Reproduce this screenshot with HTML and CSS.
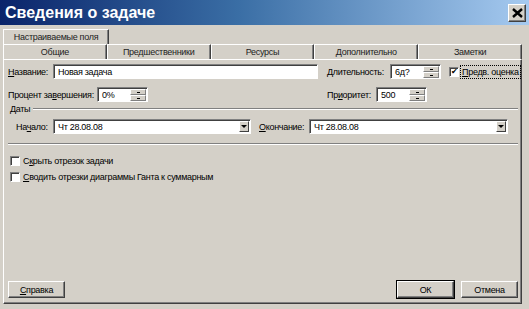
FILE: index.html
```html
<!DOCTYPE html>
<html lang="ru">
<head>
    <meta charset="UTF-8">
    <meta name="viewport" content="width=device-width, initial-scale=1.0">
    <title>Сведения о задаче</title>
    <link rel="stylesheet" href="styles.css">
</head>
<body>
    <div class="dialog">
        <div class="titlebar">
            <span class="title">Сведения о задаче</span>
            <button class="close">
                <svg width="11" height="10" viewBox="0 0 11 10"><path d="M1 1 L10 9 M10 1 L1 9" stroke="#000" stroke-width="2.4"/></svg>
            </button>
        </div>

        <div class="tabs">
            <div class="tab-row back">
                <div class="tab">Настраиваемые поля</div>
            </div>
            <div class="tab-row">
                <div class="tab">Общие</div>
                <div class="tab">Предшественники</div>
                <div class="tab">Ресурсы</div>
                <div class="tab">Дополнительно</div>
                <div class="tab">Заметки</div>
            </div>
        </div>

        <div class="panel">
            <div class="row">
                <label class="lbl name-lbl"><u>Н</u>азвание:</label>
                <div class="field name-field">Новая задача</div>
                <label class="lbl dur-lbl"><u>Д</u>лительность:</label>
                <div class="field spin dur-field">
                    <span class="value">6д?</span>
                    <div class="spinner"><span></span><span></span></div>
                </div>
                <div class="check-wrap">
                    <span class="checkbox checked">✔</span>
                    <span class="focus"><u>П</u>редв. оценка</span>
                </div>
            </div>

            <div class="row second">
                <label class="lbl pct-lbl">Процент за<u>в</u>ершения:</label>
                <div class="field spin pct-field">
                    <span class="value">0%</span>
                    <div class="spinner"><span></span><span></span></div>
                </div>
                <label class="lbl prio-lbl">Пр<u>и</u>оритет:</label>
                <div class="field spin prio-field">
                    <span class="value">500</span>
                    <div class="spinner"><span></span><span></span></div>
                </div>
            </div>

            <div class="group">
                <div class="group-title"><span>Даты</span></div>
                <div class="row dates">
                    <label class="lbl start-lbl">На<u>ч</u>ало:</label>
                    <div class="field combo start-field">
                        <span class="value">Чт 28.08.08</span>
                        <span class="drop"></span>
                    </div>
                    <label class="lbl end-lbl"><u>О</u>кончание:</label>
                    <div class="field combo end-field">
                        <span class="value">Чт 28.08.08</span>
                        <span class="drop"></span>
                    </div>
                </div>
            </div>

            <div class="separator"></div>

            <div class="options">
                <div class="option"><span class="checkbox"></span><span>С<u>к</u>рыть отрезок задачи</span></div>
                <div class="option"><span class="checkbox"></span><span><u>С</u>водить отрезки диаграммы Ганта к суммарным</span></div>
            </div>

            <div class="footer">
                <button class="btn"><u>С</u>правка</button>
                <div class="footer-right">
                    <button class="btn default">ОК</button>
                    <button class="btn">Отмена</button>
                </div>
            </div>
        </div>
    </div>
</body>
</html>
```

FILE: styles.css
```css
body {
    margin: 0;
    font-family: "Liberation Sans", Arial, sans-serif;
    font-size: 9px;
    letter-spacing: -0.3px;
    color: #000;
    background: #d4d0c8;
}
.dialog {
    width: 529px;
    height: 309px;
    background: #d4d0c8;
    display: flex;
    flex-direction: column;
    overflow: hidden;
}
.titlebar {
    height: 25px;
    display: flex;
    align-items: center;
    justify-content: space-between;
    padding: 0 3px 0 5px;
    background: linear-gradient(to right, #0a246a 0%, #3a6ea5 45%, #a6caf0 100%);
}
.title {
    color: #fff;
    font-weight: bold;
    font-size: 16px;
    letter-spacing: 0;
}
.close {
    width: 18px;
    height: 18px;
    padding: 0;
    display: flex;
    align-items: center;
    justify-content: center;
    background: #d4d0c8;
    border: 1px solid;
    border-color: #fff #404040 #404040 #fff;
    box-shadow: inset -1px -1px #808080;
}
.tabs {
    margin-top: 4px;
    padding: 0 7px 0 3px;
}
.tab-row {
    display: flex;
    height: 15px;
}
.tab {
    flex: 1;
    text-align: center;
    line-height: 14px;
    color: #222;
    border-top: 1px solid #fff;
    border-left: 1px solid #fff;
    border-right: 1px solid #404040;
    box-shadow: inset -1px 0 #808080;
}
.back .tab {
    flex: 0 0 104px;
}
.panel {
    flex: 1;
    margin: 0 7px 5px 3px;
    padding: 4px 3px 5px 4px;
    border-left: 1px solid #fff;
    border-top: 1px solid #fff;
    border-right: 1px solid #404040;
    border-bottom: 1px solid #404040;
    box-shadow: inset -1px -1px #808080;
    display: flex;
    flex-direction: column;
}
.row {
    display: flex;
    align-items: center;
    height: 15px;
}
.row.second {
    margin-top: 8px;
}
.lbl {
    white-space: nowrap;
    flex: none;
}
.field {
    flex: none;
    height: 15px;
    box-sizing: border-box;
    background: #fff;
    border: 1px solid;
    border-color: #808080 #fff #fff #808080;
    box-shadow: inset 1px 1px #404040;
    padding: 1px 0 0 4px;
    line-height: 12px;
    white-space: nowrap;
}
.name-lbl { width: 45px; }
.name-field { width: 265px; }
.dur-lbl {
    margin-left: 9px;
    width: 63px;
}
.spin {
    display: flex;
    justify-content: space-between;
    padding-right: 1px;
}
.spinner {
    width: 16px;
    display: flex;
    flex-direction: column;
}
.spinner span {
    flex: 1;
    background: #d4d0c8 linear-gradient(#000, #000) no-repeat center / 3px 1px;
    border: 1px solid;
    border-color: #fff #808080 #808080 #fff;
}
.dur-field { width: 51px; }
.check-wrap {
    display: flex;
    align-items: center;
    margin-left: 8px;
    white-space: nowrap;
}
.checkbox {
    flex: none;
    width: 10px;
    height: 10px;
    box-sizing: border-box;
    background: #fff;
    border: 1px solid;
    border-color: #808080 #fff #fff #808080;
    box-shadow: inset 1px 1px #404040;
    font-size: 8px;
    line-height: 8px;
    letter-spacing: 0;
    text-align: center;
}
.focus {
    margin-left: 2px;
    padding: 0 1px;
    outline: 1px dotted #000;
    line-height: 12px;
}
.pct-lbl { width: 89px; }
.pct-field { width: 51px; }
.prio-lbl {
    margin-left: 179px;
    width: 49px;
}
.prio-field { width: 51px; }
.group {
    margin-top: 1px;
}
.group-title {
    display: flex;
    align-items: center;
    gap: 3px;
    height: 12px;
    margin-left: 2px;
}
.group-title::after {
    content: "";
    flex: 1;
    height: 0;
    border-top: 1px solid #808080;
    border-bottom: 1px solid #fff;
}
.dates {
    margin-top: 4px;
}
.combo {
    display: flex;
    justify-content: space-between;
    padding-right: 1px;
}
.drop {
    width: 10px;
    height: 11px;
    box-sizing: border-box;
    background: #d4d0c8;
    border: 1px solid;
    border-color: #fff #404040 #404040 #fff;
    position: relative;
}
.drop::after {
    content: "";
    position: absolute;
    left: 1px;
    top: 3px;
    border-left: 3px solid transparent;
    border-right: 3px solid transparent;
    border-top: 3px solid #000;
}
.start-lbl {
    margin-left: 8px;
    width: 37px;
}
.start-field { width: 198px; }
.end-lbl {
    margin-left: 8px;
    width: 50px;
}
.end-field { width: 199px; }
.separator {
    margin-top: 9px;
    border-top: 1px solid #808080;
    border-bottom: 1px solid #fff;
}
.options {
    margin-top: 11px;
    display: flex;
    flex-direction: column;
    gap: 6px;
    padding-left: 2px;
}
.option {
    display: flex;
    align-items: center;
    gap: 3px;
    height: 10px;
}
.footer {
    margin-top: auto;
    display: flex;
    justify-content: space-between;
}
.footer-right {
    display: flex;
    gap: 7px;
}
.btn {
    width: 57px;
    height: 17px;
    padding: 0;
    font-family: inherit;
    font-size: 9px;
    letter-spacing: -0.3px;
    background: #d4d0c8;
    border: 1px solid;
    border-color: #fff #404040 #404040 #fff;
    box-shadow: inset -1px -1px #808080;
}
.btn.default {
    outline: 1px solid #000;
}
```
